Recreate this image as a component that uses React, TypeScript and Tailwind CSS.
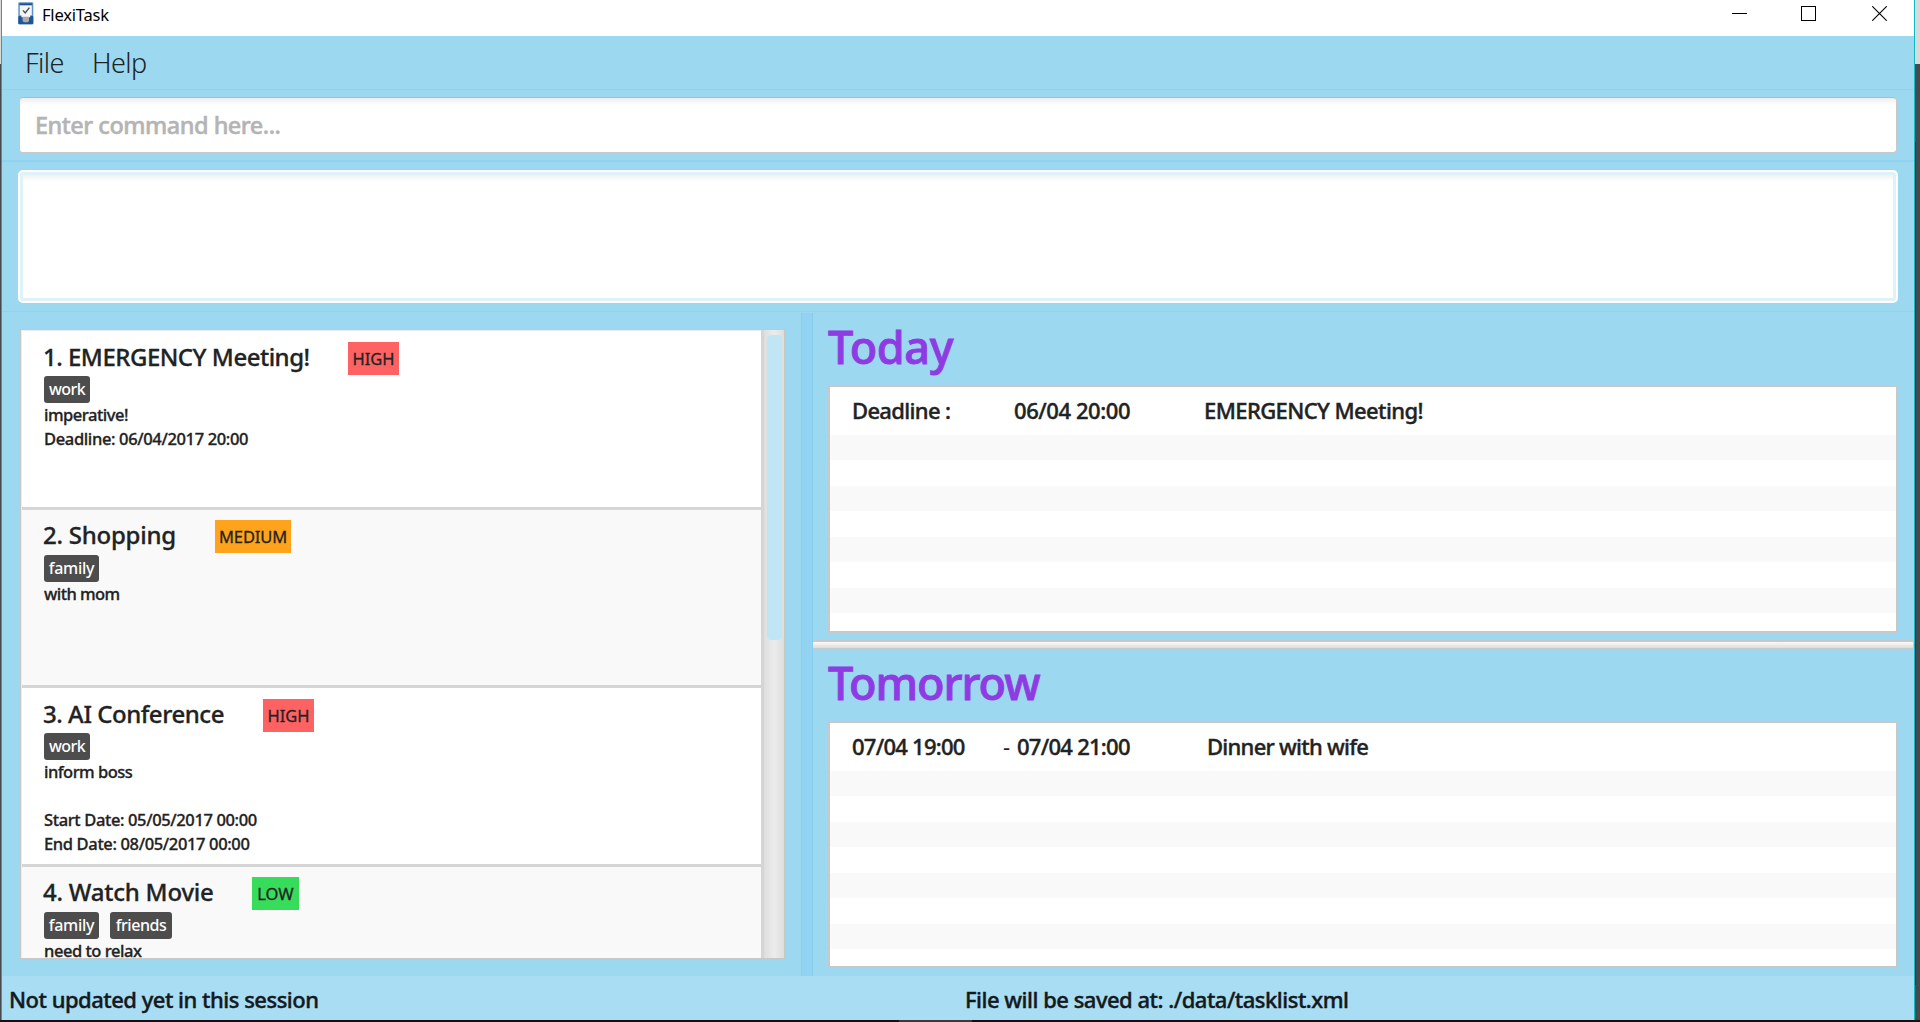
type Task = {
  title: string;
  titleCls: string;
  level: string;
  levelCls: string;
  tags: { name: string; cls: string }[];
  lines: { text: string; cls: string }[];
};

const TASKS: Task[] = [
  {
    title: "1. EMERGENCY Meeting!",
    titleCls: "w-[305px] tracking-[-0.5px]",
    level: "HIGH",
    levelCls: "w-[51px] bg-[#ff6262]",
    tags: [{ name: "work", cls: "w-[46px] tracking-[-0.6px]" }],
    lines: [
      { text: "imperative!", cls: "tracking-[-0.48px]" },
      { text: "Deadline: 06/04/2017 20:00", cls: "tracking-[-0.36px]" },
    ],
  },
  {
    title: "2. Shopping",
    titleCls: "w-[172px] tracking-[-0.25px]",
    level: "MEDIUM",
    levelCls: "w-[76px] bg-[#ffa31c] tracking-[-0.15px]",
    tags: [{ name: "family", cls: "w-[55px] tracking-[-0.28px]" }],
    lines: [{ text: "with mom", cls: "tracking-[-0.55px]" }],
  },
  {
    title: "3. AI Conference",
    titleCls: "w-[220px] tracking-[-0.46px]",
    level: "HIGH",
    levelCls: "w-[51px] bg-[#ff6262]",
    tags: [{ name: "work", cls: "w-[46px] tracking-[-0.6px]" }],
    lines: [
      { text: "inform boss", cls: "tracking-[-0.53px]" },
      { text: "", cls: "" },
      { text: "Start Date: 05/05/2017 00:00", cls: "tracking-[-0.37px]" },
      { text: "End Date: 08/05/2017 00:00", cls: "tracking-[-0.36px]" },
    ],
  },
  {
    title: "4. Watch Movie",
    titleCls: "w-[209px] tracking-[-0.22px]",
    level: "LOW",
    levelCls: "w-[47px] bg-[#37dc5b]",
    tags: [
      { name: "family", cls: "w-[55px] tracking-[-0.28px]" },
      { name: "friends", cls: "w-[62px] tracking-[-0.45px]" },
    ],
    lines: [{ text: "need to relax", cls: "tracking-[-0.46px]" }],
  },
];

function AppIcon() {
  return (
    <svg className="ml-[16px] mt-[2px] h-[23px] w-[16px] shrink-0" viewBox="0 0 16 23">
      <rect x="0.3" y="0.3" width="15" height="22" rx="1.2" fill="#5f93c8" />
      <rect x="0.3" y="14" width="15" height="8.3" rx="1" fill="#1f5596" />
      <rect x="1.5" y="1.4" width="12.6" height="1.6" fill="#1f4f8c" />
      <path d="M1.8 3.4h12v9.8h-1.6v2H3.4v-2H1.8z" fill="#f4f5f7" />
      <path d="M4.6 14.8h6.4v4.2L9.8 20.2H5.8L4.6 19z" fill="#a9abad" />
      <path d="M5 8.4l2.2 2.6 4.2-5.4" fill="none" stroke="#4b4b4b" strokeWidth="1.4" />
    </svg>
  );
}

function TitleBar() {
  return (
    <div className="flex h-[36px] shrink-0 bg-white">
      <AppIcon />
      <span className="ml-[8px] h-[30px] flex-1 text-[16.5px] leading-[29px] tracking-[-0.2px] text-black">FlexiTask</span>
      <div className="mr-[27px] mt-[6px] flex h-[15px] gap-[54px] text-black">
        <svg className="h-[15px] w-[15px]" viewBox="0 0 15 15">
          <path d="M0 7.5h15" stroke="currentColor" />
        </svg>
        <svg className="h-[15px] w-[15px]" viewBox="0 0 15 15">
          <rect x="0.5" y="0.5" width="14" height="14" fill="none" stroke="currentColor" />
        </svg>
        <svg className="ml-[2px] h-[15px] w-[15px]" viewBox="0 0 15 15">
          <path d="M0.3 0.3l14.4 14.4M14.7 0.3L0.3 14.7" stroke="currentColor" strokeWidth="1.1" />
        </svg>
      </div>
    </div>
  );
}

function TaskCard({ task, alt }: { task: Task; alt: boolean }) {
  return (
    <div className={`h-[178.5px] shrink-0 border-b-[3px] border-[#d5d5d5] pl-[21px] ${alt ? "bg-[#f9f9f9]" : "bg-white"}`}>
      <div className="flex h-[45px] items-start">
        <span className={`mt-[8.5px] shrink-0 whitespace-nowrap text-[24px] font-medium leading-[33px] [-webkit-text-stroke:0.3px] ${task.titleCls}`}>{task.title}</span>
        <span className={`mt-[10.5px] h-[33px] text-center text-[16.5px] leading-[33px] [-webkit-text-stroke:0.3px] ${task.levelCls}`}>{task.level}</span>
      </div>
      <div className="ml-[1px] flex h-[27px] gap-[11px]">
        {task.tags.map((t) => (
          <span key={t.name} className={`h-[27px] rounded-[3px] bg-[#4d4d4d] text-center text-[16px] font-medium leading-[27px] text-white ${t.cls}`}>
            {t.name}
          </span>
        ))}
      </div>
      {task.lines.map((l, i) => (
        <div key={i} className={`ml-[1px] h-[24px] whitespace-nowrap text-[16.5px] font-medium leading-[24px] [-webkit-text-stroke:0.3px] ${l.cls}`}>
          {l.text}
        </div>
      ))}
    </div>
  );
}

function Cell({ text, cls }: { text: string; cls: string }) {
  return <span className={`shrink-0 whitespace-nowrap ${cls}`}>{text}</span>;
}

function Agenda({ title, titleCls, height, children }: { title: string; titleCls: string; height: string; children: React.ReactNode }) {
  return (
    <section className="pl-[15px] pr-[17px]">
      <h2 className={`h-[73px] pt-[3.5px] text-[45px] font-medium leading-[60px] text-[#8f3be3] [-webkit-text-stroke:0.9px] ${titleCls}`}>{title}</h2>
      <div className={`overflow-hidden border border-b-2 border-[#c8c8c8] border-l-2 bg-white ${height}`}>
        <div className="flex h-[48px] text-[22px] font-medium leading-[47px] [-webkit-text-stroke:0.4px]">{children}</div>
        {[0, 1, 2, 3].map((i) => (
          <div key={i} className="h-[51px]">
            <div className="h-[25px] bg-[#f9f9f9]" />
          </div>
        ))}
      </div>
    </section>
  );
}

export default function App() {
  return (
    <div className="flex h-[1022px] w-[1920px] flex-col overflow-hidden bg-[#111111] font-['Noto_Sans','Open_Sans',sans-serif] text-[#1f2323]">
      <div className="flex h-[1020px]">
        <div className="w-px bg-[#464a4c]">
          <div className="h-[64px] bg-[#d9d9d9]" />
        </div>
        <div className="w-px bg-[#18a9b8]" />
        <div className="flex w-[1912px] flex-col bg-[#9dd8f1]">
          <TitleBar />
          <nav className="flex h-[54px] shrink-0 border-b border-[#8fd3f0] pl-[23px] text-[27px] font-light leading-[53px]">
            <span className="w-[67px] tracking-[-0.6px]">File</span>
            <span className="tracking-[-0.55px]">Help</span>
          </nav>
          <div className="h-[72px] shrink-0 border-b-2 border-[#8fd3f0] pl-[17px] pr-[17px] pt-[7px]">
            <div className="h-[56px] rounded-[4px] border border-[#c8c8c8] border-t-[#b8b8b8] bg-white bg-linear-to-b from-[#ededed] to-white to-[7px] pl-[15px] text-[23.5px] font-medium leading-[54px] tracking-[-0.5px] text-[#b4b4b4] [-webkit-text-stroke:0.5px]">
              Enter command here...
            </div>
          </div>
          <div className="h-[150px] shrink-0 border-b border-[#8fd3f0] px-[16px] pt-[8px]">
            <div className="h-[133px] rounded-[5px] border-2 border-white bg-[#dff2fa] p-[3px]">
              <div className="h-full bg-white bg-linear-to-b from-[#f1f1f1] to-white to-[6px]" />
            </div>
          </div>
          <main className="flex h-[664px] shrink-0 pt-[1px]">
            <div className="w-[799px] pl-[17px] pt-[16px]">
              <div className="flex h-[631px] w-[767px] border-2 border-t border-[#c8c8c8]">
                <div className="flex w-[740px] flex-col overflow-hidden border-l border-t border-[#ececec]">
                  {TASKS.map((t, i) => (
                    <TaskCard key={t.title} task={t} alt={i % 2 === 1} />
                  ))}
                </div>
                <div className="flex-1 border-l-[3px] border-[#d5d5d5] bg-linear-to-r from-[#dedede] via-[#ececec] to-[#dedede] pl-[3px] pt-[5px]">
                  <div className="h-[305px] w-[15px] rounded-[4px] bg-[#c0e6f6]" />
                </div>
              </div>
            </div>
            <div className="w-[12px] border-x border-[#86ceed] bg-[#91d3f0]" />
            <div className="flex w-[1101px] flex-col">
              <Agenda title="Today" titleCls="tracking-[-0.4px]" height="h-[247px]">
                <Cell text="Deadline :" cls="ml-[22px] w-[162px] tracking-[-0.67px]" />
                <Cell text="06/04 20:00" cls="w-[190px] tracking-[-0.43px]" />
                <Cell text="EMERGENCY Meeting!" cls="tracking-[-0.6px]" />
              </Agenda>
              <div className="mr-[1px] mt-[7px] h-[9px] shrink-0 border-y border-t-2 border-[#c8c8c8] bg-linear-to-b from-[#fafafa] to-[#dddddd]" />
              <Agenda title="Tomorrow" titleCls="tracking-[-1.05px]" height="h-[246px]">
                <Cell text="07/04 19:00" cls="ml-[22px] w-[151px] tracking-[-0.74px]" />
                <Cell text="-" cls="w-[14px] font-normal [-webkit-text-stroke:0px]" />
                <Cell text="07/04 21:00" cls="w-[190px] tracking-[-0.73px]" />
                <Cell text="Dinner with wife" cls="tracking-[-0.74px]" />
              </Agenda>
            </div>
          </main>
          <footer className="flex h-[44px] bg-[#a9ddf4] pl-[7px] text-[22px] font-medium leading-[46px] text-[#14191c] [-webkit-text-stroke:0.4px]">
            <span className="w-[956px] tracking-[-0.5px]">Not updated yet in this session</span>
            <span className="tracking-[-0.5px]">File will be saved at: ./data/tasklist.xml</span>
          </footer>
        </div>
        <div className="w-px bg-[#10b9c4]" />
        <div className="w-[5px] bg-[#464a4c]">
          <div className="h-[64px] bg-[#d9d9d9]" />
          <div className="mt-[78px] h-[843px] w-px bg-[#25282a]" />
        </div>
      </div>
      <div className="flex h-[2px]">
        <div className="ml-[899px] w-[73px] bg-[#3a3a3a]" />
      </div>
    </div>
  );
}
